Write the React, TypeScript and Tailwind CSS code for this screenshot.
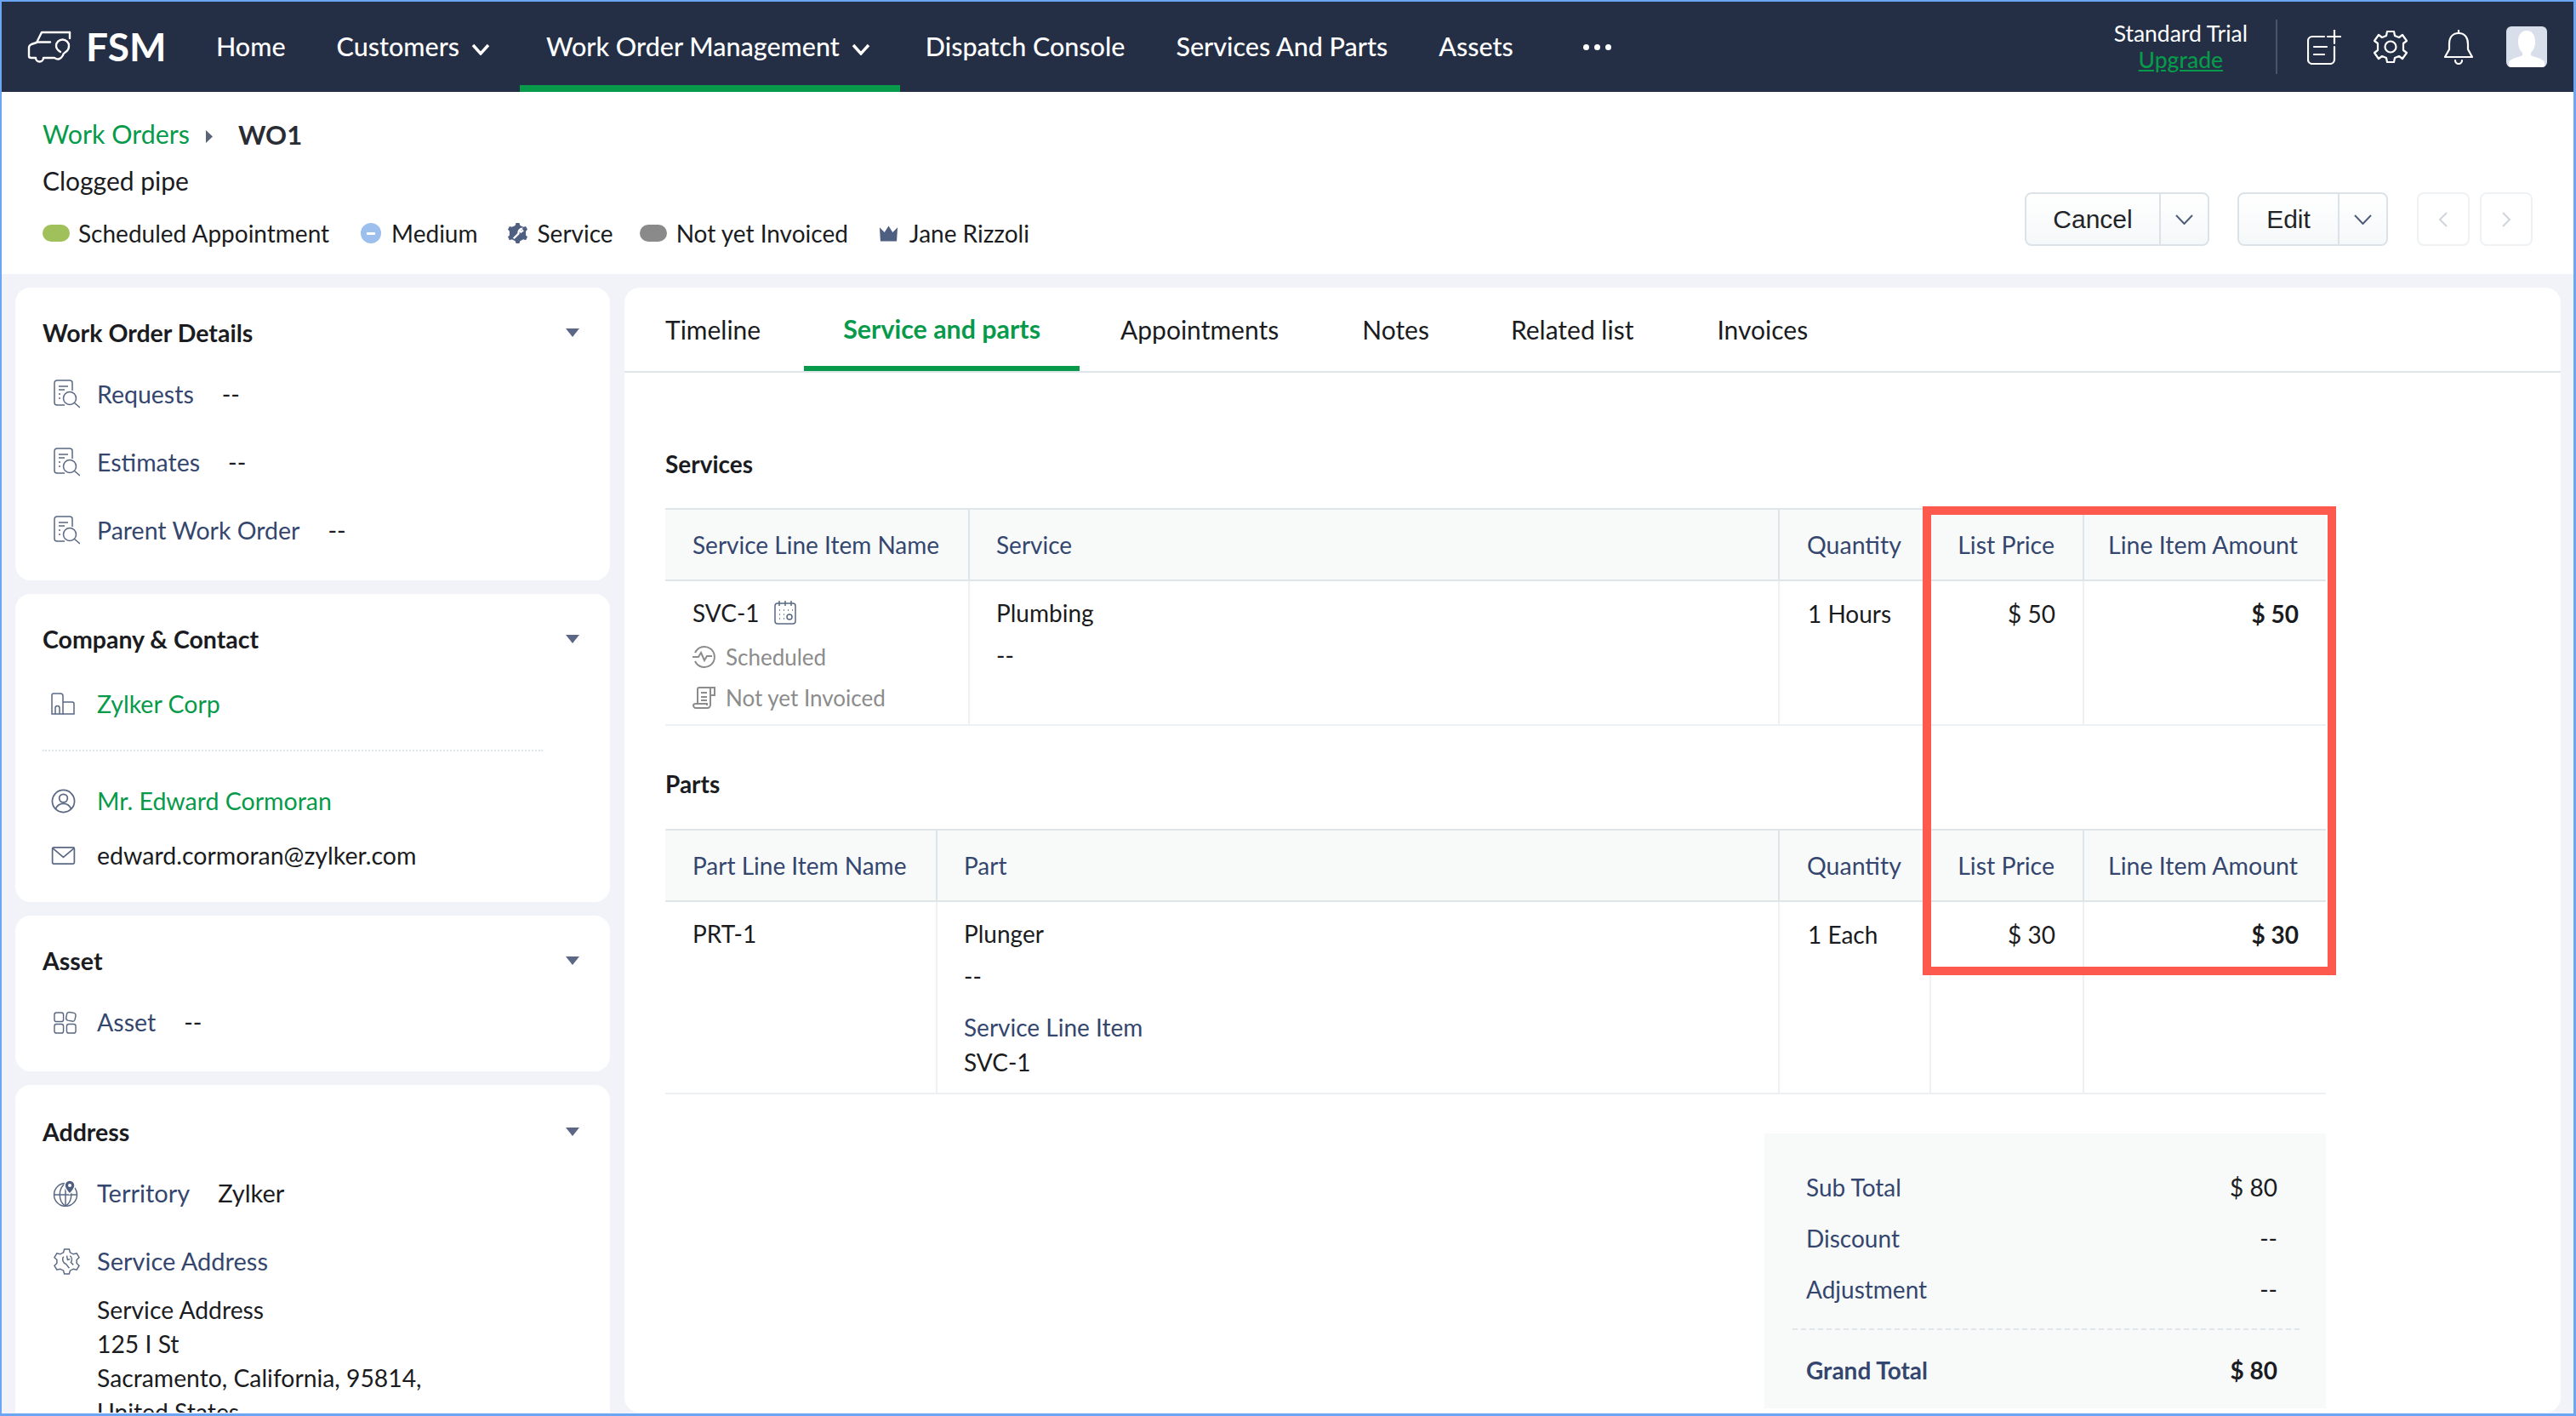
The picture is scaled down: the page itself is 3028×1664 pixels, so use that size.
import React from 'react';

const navy = '#5a6884';

function Chevron({ className }: { className: string }) {
  return (
    <svg viewBox="0 0 22 14" className={className} fill="none" stroke="currentColor" strokeWidth="3.4">
      <path d="M2 2l9 10 9-10" />
    </svg>
  );
}

function ThinChevron() {
  return (
    <svg viewBox="0 0 21 12" className="w-[21px] h-[12px] text-[#4d5b78]" fill="none" stroke="currentColor" strokeWidth="2">
      <path d="M1 1l9.500 10L20 1" />
    </svg>
  );
}

function Caret() {
  return (
    <svg viewBox="0 0 16 10" className="w-[16px] h-[10px]" fill="#5b6785">
      <path d="M0 0h16l-8 10z" />
    </svg>
  );
}

function Logo() {
  return (
    <svg viewBox="0 0 70 56" className="w-[70px] h-[56px]" fill="none" stroke="#fff" strokeWidth="2.400" strokeLinejoin="round" strokeLinecap="round">
      <path d="M58 11H25l-6 12-6 2q-3 1.500-3 4v10q0 2 3 2h5a4.500 4.500 0 0 0 9 0h12" />
      <path d="M20 22.500h15M58 11v7" />
      <path d="M40 41q6 4 10-3 0-2 2-3 5-3 5-8a7.500 7.500 0 0 0-15 0q0 4 5 7" />
    </svg>
  );
}

function DocSearch() {
  return (
    <svg viewBox="0 0 31 34" className="ml-[13px] w-[31px] h-[34px]" fill="none" stroke={navy} strokeWidth="1.500">
      <path d="M13 30H4a3 3 0 0 1-3-3V4a3 3 0 0 1 3-3h15a3 3 0 0 1 3 3v9" />
      <path d="M6 8h11M6 12h7M6 17h2M6 22h2" />
      <circle cx="19" cy="22" r="7.500" />
      <path d="M24.500 27.500L31 33" />
    </svg>
  );
}

function Building() {
  return (
    <svg viewBox="0 0 28 26" className="ml-[10px] w-[28px] h-[26px]" fill="none" stroke={navy} strokeWidth="1.500">
      <path d="M1 25V3a2 2 0 0 1 2-2h8a3 3 0 0 1 3 3v21z" />
      <path d="M5 25v-7a2.500 2.500 0 0 1 5 0v7" />
      <path d="M14 11h11a2 2 0 0 1 2 2v12H14" />
    </svg>
  );
}

function UserCircle() {
  return (
    <svg viewBox="0 0 30 30" className="ml-[10px] w-[29px] h-[29px]" fill="none" stroke={navy} strokeWidth="1.800">
      <circle cx="15" cy="15" r="13.500" />
      <circle cx="15" cy="11.500" r="5" />
      <path d="M5.500 24.500c2-5 5-6.500 9.500-6.500s7.500 1.500 9.500 6.500" />
    </svg>
  );
}

function MailIcon() {
  return (
    <svg viewBox="0 0 29 22" className="ml-[10px] w-[29px] h-[21px]" fill="none" stroke={navy} strokeWidth="1.800">
      <rect x="1" y="1" width="27" height="20" rx="1.500" />
      <path d="M1.500 2l13 11 13-11" />
    </svg>
  );
}

function AssetGrid() {
  return (
    <svg viewBox="0 0 28 28" className="ml-[13px] w-[27px] h-[27px]" fill="none" stroke={navy} strokeWidth="1.500">
      <rect x="1" y="2" width="11" height="11" rx="2.500" />
      <rect x="1" y="16" width="11" height="11" rx="2.500" />
      <rect x="16" y="16" width="11" height="11" rx="2.500" />
      <path d="M19 1.500l6 1a3 3 0 0 1 2 3l-1 5a3 3 0 0 1-3.500 2l-5-1a3 3 0 0 1-2.200-3.500l1-5a3 3 0 0 1 2.700-1.500z" />
    </svg>
  );
}

function GlobePin() {
  return (
    <svg viewBox="0 0 30 32" className="ml-[12px] w-[30px] h-[32px]" fill="none" stroke={navy} strokeWidth="1.500">
      <circle cx="15" cy="18" r="13.500" />
      <path d="M2 18h26M15 4.500v27M15 4.500c-9 6-9 21 0 27M15 4.500c9 6 9 21 0 27" />
      <path d="M20 17c-4-4-6-7-6-10a6 6 0 0 1 12 0c0 3-2 6-6 10z" fill="#4e5f82" stroke="#fff" />
      <circle cx="20" cy="7" r="2" fill="#fff" stroke="none" />
    </svg>
  );
}

function WrenchGear() {
  return (
    <svg viewBox="0 0 32 34" className="ml-[13px] w-[31px] h-[33px]" fill="none" stroke={navy} strokeWidth="1.500">
      <path d="M13 2h6l1 4 4 2 4-1 3 5-3 3v4l3 3-3 5-4-1-4 2-1 4h-6l-1-4-4-2-4 1-3-5 3-3v-4l-3-3 3-5 4 1 4-2z" />
      <path d="M20 10a6 6 0 0 1 1 8l3 3M12 11a6 6 0 0 0 3 9l4 5M16 10l1 5 3-1" />
    </svg>
  );
}

function TableHead({ grid, cols }: { grid: string; cols: string[] }) {
  return (
    <div className={`grid ${grid} h-[86px] bg-[#f8fafa] border-y-2 border-[#dfe6ea] text-[#34466e]`}>
      {cols.map((c, i) => (
        <div
          key={c}
          className={`flex items-center border-[#dfe6ea] ${i > 0 ? 'border-l-2' : ''} ${i > 1 ? 'text-[28.500px]' : ''} ${i > 2 ? 'justify-end pr-[33px]' : i === 1 ? 'pl-[31px]' : 'pl-[32px]'}`}
        >
          {c}
        </div>
      ))}
    </div>
  );
}

function Amounts({ list, total, qty }: { list: string; total: string; qty: string }) {
  return (
    <>
      <div className="border-l-2 border-[#eef1f3] pl-[33px] pt-[17px]">{qty}</div>
      <div className="border-l-2 border-[#eef1f3] pr-[32px] pt-[17px] text-right">{list}</div>
      <div className="border-l-2 border-[#eef1f3] pr-[32px] pt-[17px] text-right font-bold">{total}</div>
    </>
  );
}

function Row({ icon, label, value, green }: { icon: React.ReactNode; label: string; value?: string; green?: boolean }) {
  return (
    <div className="flex items-center h-[40px]">
      <div className="w-[64px] flex">{icon}</div>
      <span className={green ? 'text-[#069a4a]' : 'text-[#34466e]'}>{label}</span>
      {value && <span className="ml-[33px]">{value}</span>}
    </div>
  );
}

function CardHead({ title }: { title: string }) {
  return (
    <div className="flex items-center justify-between h-[40px] pr-[36px]">
      <span className="font-bold">{title}</span>
      <Caret />
    </div>
  );
}

export default function App() {
  return (
    <div className="w-[3028px] h-[1664px] overflow-hidden flex flex-col border-t-2 border-l-2 border-r-[3px] border-b-[3px] border-[#6ba6f5] bg-[#f1f3f8] font-[family-name:Lato,sans-serif] text-[28px] text-[#1a1c21]">
      {/* Top nav */}
      <nav className="h-[106px] shrink-0 bg-[#242f45] flex items-stretch text-white text-[30.500px] font-medium">
        <div className="flex items-center pl-[22px] w-[222px]">
          <Logo />
          <span className="ml-[7px] text-[46px] font-bold leading-none">FSM</span>
        </div>
        <a className="flex items-center px-[30px]">Home</a>
        <a className="flex items-center pl-[30px] pr-[35px]">
          Customers
          <Chevron className="w-[22px] h-[14px] ml-[14px] mt-[6px]" />
        </a>
        <a className="flex items-center pl-[31px] pr-[35px] border-b-8 border-[#069a4a] pt-[8px]">
          Work Order Management
          <Chevron className="w-[22px] h-[14px] ml-[14px] mt-[6px]" />
        </a>
        <a className="flex items-center px-[30px]">Dispatch Console</a>
        <a className="flex items-center px-[30px]">Services And Parts</a>
        <a className="flex items-center px-[30px]">Assets</a>
        <div className="flex items-center gap-[6px] ml-[52px]">
          <span className="w-[7px] h-[7px] rounded-full bg-white" />
          <span className="w-[7px] h-[7px] rounded-full bg-white" />
          <span className="w-[7px] h-[7px] rounded-full bg-white" />
        </div>
        <div className="ml-auto flex items-center pr-[31px] font-normal">
          <div className="flex flex-col items-center text-[26.500px] leading-[31px]">
            <span>Standard Trial</span>
            <span className="text-[#069a4a] underline font-medium">Upgrade</span>
          </div>
          <div className="w-[2px] h-[64px] bg-[#4a5363] ml-[33px] mr-[35px]" />
          <svg viewBox="0 0 40 41" className="w-[40px] h-[41px]" fill="none" stroke="#fff" strokeWidth="2.200" strokeLinecap="round">
            <path d="M20 8H6a5 5 0 0 0-5 5v22a5 5 0 0 0 5 5h21a5 5 0 0 0 5-5V20" />
            <path d="M8 20h15M8 29h12M24 8h16M32 0v16" />
          </svg>
          <svg viewBox="0 0 40 40" className="w-[40px] h-[40px] ml-[38px]" fill="none" stroke="#fff" strokeWidth="2.200" strokeLinejoin="round">
            <path d="M16 2h8l1 5 5 2 4-3 5 7-4 3v8l4 3-5 7-4-3-5 2-1 5h-8l-1-5-5-2-4 3-5-7 4-3v-8l-4-3 5-7 4 3 5-2z" />
            <circle cx="20" cy="20" r="6.500" />
          </svg>
          <svg viewBox="0 0 36 41" className="w-[36px] h-[41px] ml-[42px]" fill="none" stroke="#fff" strokeWidth="2.200" strokeLinejoin="round" strokeLinecap="round">
            <path d="M18 1v3" />
            <path d="M18 4C10 4 7 10 7 17v6l-5 9h32l-5-9v-6c0-7-3-13-11-13z" />
            <path d="M14 36a4 4 0 0 0 8 0" />
          </svg>
          <div className="w-[48px] h-[48px] ml-[38px] rounded-[6px] bg-[#d9dfea] overflow-hidden">
            <svg viewBox="0 0 48 48" className="w-[48px] h-[48px]" fill="#fff">
              <path d="M24 5c7 0 10 6 10 13 0 6-2 10-5 13v3c3 2 13 3 16 8v6H3v-6c3-5 13-6 16-8v-3c-3-3-5-7-5-13 0-7 3-13 10-13z" />
            </svg>
          </div>
        </div>
      </nav>

      {/* Work order header */}
      <header className="h-[214px] shrink-0 bg-white flex justify-between items-end pl-[48px] pr-[48px] pb-[33px]">
        <div className="self-start pt-[30px]">
          <div className="flex items-center h-[40px] text-[30.400px]">
            <span className="text-[#069a4a]">Work Orders</span>
            <svg viewBox="0 0 8 15" className="w-[8px] h-[15px] ml-[19px] mt-[4px]" fill="#5a6478">
              <path d="M0 0l8 7.500L0 15z" />
            </svg>
            <span className="ml-[30px] font-bold text-[31px] text-[#2a2c33]">WO1</span>
          </div>
          <div className="h-[40px] mt-[14px] flex items-center text-[30px]">Clogged pipe</div>
          <div className="h-[40px] mt-[22px] flex items-center">
            <span className="w-[32px] h-[20px] rounded-full bg-[#a0c05c]" />
            <span className="ml-[10px]">Scheduled Appointment</span>
            <span className="ml-[37px] w-[24px] h-[24px] rounded-full bg-[#9cbfee] flex items-center justify-center">
              <span className="w-[10px] h-[3px] bg-white" />
            </span>
            <span className="ml-[12px]">Medium</span>
            <svg viewBox="0 0 24 26" className="ml-[35px] w-[23px] h-[25px]" fill="#4e5f82">
              <path d="M10 0h4l1 3 4 2 3-1 2 4-2 2v5l2 2-2 4-3-1-4 2-1 3h-4l-1-3-4-2-3 1-2-4 2-2v-5l-2-2 2-4 3 1 4-2z" />
              <path d="M7 19l6-6a5 5 0 0 1 5-6M14 8l2 3 3-2" fill="none" stroke="#fff" strokeWidth="2.400" />
            </svg>
            <span className="ml-[12px]">Service</span>
            <span className="ml-[31px] w-[32px] h-[20px] rounded-full bg-[#8a8a8a]" />
            <span className="ml-[11px]">Not yet Invoiced</span>
            <svg viewBox="0 0 24 20" className="ml-[36px] w-[23px] h-[20px]" fill="#4e5f82">
              <path d="M1 3l6 6 5-8 5 8 6-6-1 17H2z" />
            </svg>
            <span className="ml-[13px]">Jane Rizzoli</span>
          </div>
        </div>
        <div className="flex items-stretch h-[63px] font-[family-name:'Liberation_Sans',sans-serif] text-[30px] text-[#222429]">
          <div className="flex w-[217px] rounded-[8px] border-2 border-[#dbe3e8] bg-gradient-to-b from-white to-[#f5f8f9]">
            <div className="w-[158px] flex items-center justify-center border-r-2 border-[#dbe3e8]">Cancel</div>
            <div className="flex-1 flex items-center justify-center"><ThinChevron /></div>
          </div>
          <div className="flex w-[177px] ml-[33px] rounded-[8px] border-2 border-[#dbe3e8] bg-gradient-to-b from-white to-[#f5f8f9]">
            <div className="w-[118px] flex items-center justify-center border-r-2 border-[#dbe3e8]">Edit</div>
            <div className="flex-1 flex items-center justify-center"><ThinChevron /></div>
          </div>
          <div className="w-[62px] ml-[34px] rounded-[8px] border-2 border-[#eef2f4] flex items-center justify-center">
            <svg viewBox="0 0 12 18" className="w-[12px] h-[18px]" fill="none" stroke="#d0d5dd" strokeWidth="2"><path d="M10 1L2 9l8 8" /></svg>
          </div>
          <div className="w-[62px] ml-[12px] rounded-[8px] border-2 border-[#eef2f4] flex items-center justify-center">
            <svg viewBox="0 0 12 18" className="w-[12px] h-[18px]" fill="none" stroke="#d0d5dd" strokeWidth="2"><path d="M2 1l8 8-8 8" /></svg>
          </div>
        </div>
      </header>

      <div className="flex-1 min-h-0 flex pt-[16px] pl-[16px] pb-px overflow-hidden">
        {/* Sidebar */}
        <aside className="w-[699px] shrink-0 flex flex-col gap-[16px] text-[28.500px]">
          <section className="h-[344px] shrink-0 bg-white rounded-[18px] pl-[32px] pt-[33px]">
            <CardHead title="Work Order Details" />
            <div className="mt-[32px] flex flex-col gap-[40px]">
              <Row icon={<DocSearch />} label="Requests" value="--" />
              <Row icon={<DocSearch />} label="Estimates" value="--" />
              <Row icon={<DocSearch />} label="Parent Work Order" value="--" />
            </div>
          </section>
          <section className="h-[362px] shrink-0 bg-white rounded-[18px] pl-[32px] pt-[33px]">
            <CardHead title="Company & Contact" />
            <div className="mt-[36px]">
              <Row icon={<Building />} label="Zylker Corp" green />
            </div>
            <div className="mt-[34px] w-[588px] border-t-2 border-dotted border-[#dfe6ea]" />
            <div className="mt-[38px]">
              <Row icon={<UserCircle />} label="Mr. Edward Cormoran" green />
            </div>
            <div className="mt-[24px] flex items-center h-[40px]">
              <div className="w-[64px] flex"><MailIcon /></div>
              <span>edward.cormoran@zylker.com</span>
            </div>
          </section>
          <section className="h-[183px] shrink-0 bg-white rounded-[18px] pl-[32px] pt-[33px]">
            <CardHead title="Asset" />
            <div className="mt-[32px]">
              <Row icon={<AssetGrid />} label="Asset" value="--" />
            </div>
          </section>
          <section className="flex-1 bg-white rounded-t-[18px] pl-[32px] pt-[35px] overflow-hidden">
            <CardHead title="Address" />
            <div className="mt-[32px] text-[29px]">
              <Row icon={<GlobePin />} label="Territory" value="Zylker" />
            </div>
            <div className="mt-[40px] text-[29px]">
              <Row icon={<WrenchGear />} label="Service Address" />
            </div>
            <div className="pl-[64px] mt-[17px] leading-[40px] text-[28.300px]">
              <div>Service Address</div>
              <div>125 I St</div>
              <div>Sacramento, California, 95814,</div>
              <div>United States</div>
            </div>
          </section>
        </aside>

        {/* Main panel */}
        <main className="relative ml-[17px] w-[2276px] shrink-0 bg-white rounded-[18px] overflow-hidden">
          <div className="h-[100px] flex items-stretch border-b-2 border-[#dfe6ea] pl-[1px] text-[30px]">
            <a className="flex items-center pl-[47px] pr-[51px]">Timeline</a>
            <a className="flex items-center px-[46px] pt-[6px] border-b-[6px] border-[#069a4a] text-[#069a4a] text-[30.400px] font-bold">Service and parts</a>
            <a className="flex items-center pl-[48px] pr-[50px]">Appointments</a>
            <a className="flex items-center px-[48px]">Notes</a>
            <a className="flex items-center pl-[48px] pr-[50px]">Related list</a>
            <a className="flex items-center px-[48px]">Invoices</a>
          </div>

          <div className="pl-[48px] w-[2000px]">
            <h2 className="mt-[90px] mb-[35px] h-[34px] leading-[34px] font-bold">Services</h2>
            <TableHead
              grid="grid-cols-[356px_952px_178px_180px_286px]"
              cols={['Service Line Item Name', 'Service', 'Quantity', 'List Price', 'Line Item Amount']}
            />
            <div className="grid grid-cols-[356px_952px_178px_180px_286px] h-[170px] border-b-2 border-[#eef1f3]">
              <div className="pl-[32px] pt-[18px]">
                <div className="flex items-center h-[38px]">
                  SVC-1
                  <svg viewBox="0 0 26 28" className="ml-[17px] w-[26px] h-[28px]" fill="none" stroke={navy} strokeWidth="1.500">
                    <rect x="1" y="3" width="24" height="24" rx="3" />
                    <path d="M6 0v6M13 0v6M20 0v6M6 11h1M11 11h1M16 11h1M21 11h1M6 16h1M11 16h1M6 21h1M11 21h1" />
                    <circle cx="18" cy="19" r="3" />
                  </svg>
                </div>
                <div className="flex items-center h-[26px] mt-[20px] text-[26px] text-[#8c8c8c]">
                  <svg viewBox="0 0 28 28" className="w-[28px] h-[28px] mr-[11px]" fill="none" stroke="#8c8c8c" strokeWidth="2">
                    <path d="M3 9A12 12 0 1 1 3 19" />
                    <path d="M0 14h7l3-5 4 9 3-5h6" />
                  </svg>
                  Scheduled
                </div>
                <div className="flex items-center h-[26px] mt-[22px] text-[26px] text-[#8c8c8c]">
                  <svg viewBox="0 0 28 28" className="w-[28px] h-[28px] mr-[11px]" fill="none" stroke="#8c8c8c" strokeWidth="2">
                    <path d="M6 21V4a2 2 0 0 1 2-2h18v9h-5M21 2v19a4 4 0 0 1-4 5H4c-2 0-3-2-3-3s1-2 3-2h13v2" />
                    <path d="M10 8h7M10 13h7M10 17h7" />
                  </svg>
                  Not yet Invoiced
                </div>
              </div>
              <div className="border-l-2 border-[#eef1f3] pl-[31px] pt-[18px]">
                <div className="h-[38px] flex items-center">Plumbing</div>
                <div className="mt-[12px] h-[38px] flex items-center">--</div>
              </div>
              <Amounts qty="1 Hours" list="$ 50" total="$ 50" />
            </div>

            <h2 className="mt-[51px] mb-[36px] h-[34px] leading-[34px] font-bold">Parts</h2>
            <TableHead
              grid="grid-cols-[318px_990px_178px_180px_286px]"
              cols={['Part Line Item Name', 'Part', 'Quantity', 'List Price', 'Line Item Amount']}
            />
            <div className="grid grid-cols-[318px_990px_178px_180px_286px] h-[226px] border-b-2 border-[#eef1f3]">
              <div className="pl-[32px] pt-[18px]">
                <div className="h-[38px] flex items-center">PRT-1</div>
              </div>
              <div className="border-l-2 border-[#eef1f3] pl-[31px] pt-[18px]">
                <div className="h-[38px] flex items-center">Plunger</div>
                <div className="mt-[12px] h-[38px] flex items-center">--</div>
                <div className="mt-[22px] h-[38px] flex items-center text-[#34466e]">Service Line Item</div>
                <div className="mt-[3px] h-[38px] flex items-center">SVC-1</div>
              </div>
              <Amounts qty="1 Each" list="$ 30" total="$ 30" />
            </div>

            <div className="ml-[1292px] mt-[46px] w-[660px] h-[323px] bg-[#f8fafa] pl-[49px] pr-[57px] pt-[33px]">
              <div className="flex justify-between items-center h-[60px]">
                <span className="text-[#34466e]">Sub Total</span>
                <span>$ 80</span>
              </div>
              <div className="flex justify-between items-center h-[60px]">
                <span className="text-[#34466e]">Discount</span>
                <span>--</span>
              </div>
              <div className="flex justify-between items-center h-[60px]">
                <span className="text-[#34466e]">Adjustment</span>
                <span>--</span>
              </div>
              <div className="mt-[16px] -ml-[16px] -mr-[26px] border-t-2 border-dashed border-[#dfe6ea]" />
              <div className="flex justify-between items-center h-[94px] font-bold">
                <span className="text-[#34466e]">Grand Total</span>
                <span>$ 80</span>
              </div>
            </div>
          </div>

          {/* Red highlight over the price columns */}
          <div className="absolute left-[1526px] top-[257px] w-[486px] h-[551px] border-[10px] border-[#fd5a4d]" />
        </main>
      </div>
    </div>
  );
}
